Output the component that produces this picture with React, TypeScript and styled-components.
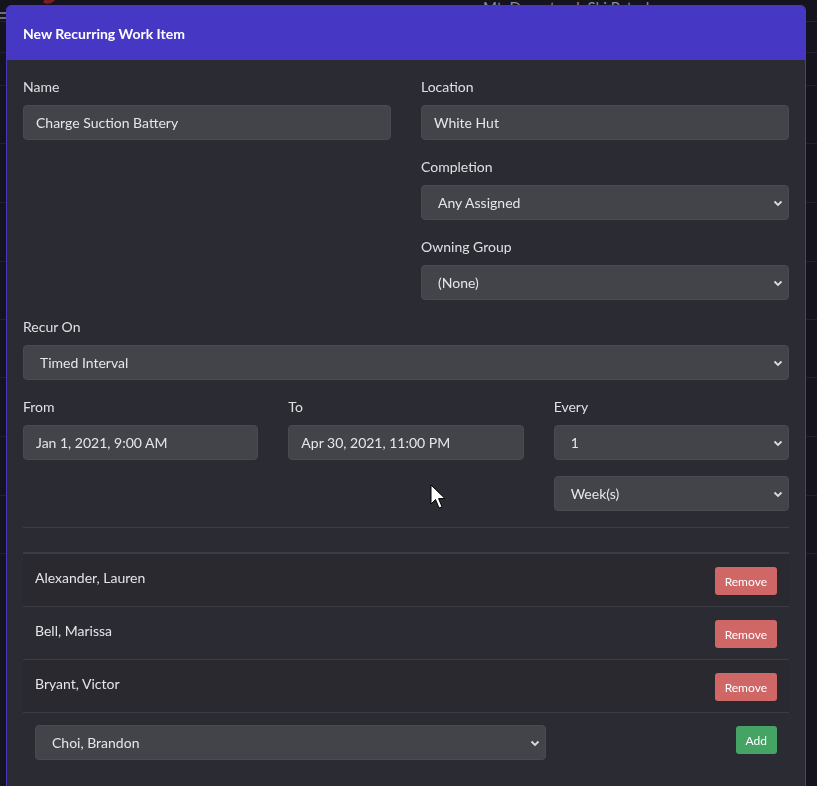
import React from "react";
import styled, { createGlobalStyle } from "styled-components";

const Global = createGlobalStyle`
  html, body { margin: 0; padding: 0; }
  body {
    background: #14131e;
    font-family: "Segoe UI", Lato, "Liberation Sans", sans-serif;
    color: #e3e3e6;
    overflow: hidden;
  }
  * { box-sizing: border-box; }
`;

const Page = styled.div`
  width: 817px;
  height: 786px;
  overflow: hidden;
`;

const NavBar = styled.div`
  height: 22px;
  display: flex;
  align-items: flex-start;
  border-bottom: 1px solid #25242f;
`;

const Hamburger = styled.div`
  width: 8px;
  margin-top: 12px;
  display: flex;
  flex-direction: column;
  gap: 3px;
  & > span { display: block; height: 2px; background: #6d6d75; }
`;

const Logo = styled.svg`
  width: 14px;
  height: 10px;
  margin-left: 34px;
  margin-top: -4px;
`;

const NavTitle = styled.div`
  margin-left: 427px;
  margin-top: -2px;
  font-size: 15px;
  color: #8c8c95;
`;

const BgRow = styled.div<{ $h: number }>`
  height: ${(p) => p.$h}px;
  border-bottom: 1px solid #23222d;
`;

const Modal = styled.div`
  position: fixed;
  top: 5px;
  left: 6px;
  width: 800px;
  height: 800px;
  background: #2b2b33;
  border: 1px solid #4638c4;
  border-radius: 5px 5px 0 0;
  overflow: hidden;
`;

const Header = styled.div`
  height: 54px;
  background: #4638c4;
  display: flex;
  align-items: center;
  padding: 0 16px;
  font-size: 14px;
  font-weight: 700;
  color: #ffffff;
`;

const Body = styled.div`
  padding: 16px;
  display: flex;
  flex-direction: column;
`;

const Grid = styled.div<{ $cols: number }>`
  display: grid;
  grid-template-columns: repeat(${(p) => p.$cols}, 1fr);
  column-gap: 30px;
`;

const Col = styled.div`
  display: flex;
  flex-direction: column;
`;

const Group = styled.div`
  display: flex;
  flex-direction: column;
  margin-bottom: 16px;
`;

const Label = styled.label`
  font-size: 14px;
  line-height: 21px;
  color: #e0e0e3;
  margin-bottom: 8px;
`;

const Input = styled.input`
  height: 35px;
  width: 100%;
  background: #434449;
  border: 1px solid #4a4b51;
  border-radius: 4px;
  color: #e6e6e9;
  font-family: inherit;
  font-size: 14px;
  padding: 0 12px;
  outline: none;
`;

const SelectWrap = styled.div`
  position: relative;
  width: 100%;
`;

const SelectBox = styled.select`
  appearance: none;
  -webkit-appearance: none;
  height: 35px;
  width: 100%;
  background: #434449;
  border: 1px solid #4a4b51;
  border-radius: 4px;
  color: #e6e6e9;
  font-family: inherit;
  font-size: 14px;
  padding: 0 16px;
  outline: none;
`;

const Chevron = styled.svg`
  position: absolute;
  right: 6px;
  top: 50%;
  width: 10px;
  height: 10px;
  margin-top: -5px;
  pointer-events: none;
`;

const Select: React.FC<{ value: string }> = ({ value }) => (
  <SelectWrap>
    <SelectBox defaultValue={value}>
      <option>{value}</option>
    </SelectBox>
    <Chevron viewBox="0 0 10 10">
      <path d="M1.5 3.5 L5 7 L8.5 3.5" fill="none" stroke="#dcdce0" strokeWidth="1.8" />
    </Chevron>
  </SelectWrap>
);

const Divider = styled.hr`
  border: 0;
  border-top: 1px solid #3e3e46;
  margin: 0 0 24px 0;
`;

const Table = styled.div`
  border-top: 2px solid #3c3c44;
  display: flex;
  flex-direction: column;
`;

const Row = styled.div<{ $striped?: boolean }>`
  display: flex;
  align-items: flex-start;
  justify-content: space-between;
  padding: 12px;
  height: 53px;
  border-bottom: 1px solid #3c3c44;
  background: ${(p) => (p.$striped ? "#29292f" : "transparent")};
  font-size: 14px;
  color: #e6e6e9;
  &:last-child {
    border-bottom: 0;
    height: auto;
  }
`;

const Name = styled.span`
  line-height: 21px;
  margin-top: 1px;
`;

const AddCell = styled.div`
  width: 511px;
`;

const Btn = styled.button<{ $variant: "danger" | "success" }>`
  height: 28px;
  margin-top: 1px;
  padding: 0 10px;
  border: 0;
  border-radius: 3px;
  font-family: inherit;
  font-size: 12px;
  color: #ffffff;
  background: ${(p) => (p.$variant === "danger" ? "#d06767" : "#45a363")};
`;

const Cursor = styled.svg`
  position: fixed;
  left: 430px;
  top: 484px;
  width: 17px;
  height: 27px;
`;

const people = ["Alexander, Lauren", "Bell, Marissa", "Bryant, Victor"];

export default function App() {
  return (
    <Page>
      <Global />
      <NavBar>
        <Hamburger><span /><span /></Hamburger>
        <Logo viewBox="0 0 14 10">
          <path d="M1 6 C3 1, 10 0, 13 4 C10 8, 4 9, 1 6 Z" fill="#7a1d24" />
        </Logo>
        <NavTitle>Mt. Dumptruck Ski Patrol</NavTitle>
      </NavBar>
      <BgRow $h={31} />
      <BgRow $h={33} />
      <BgRow $h={58} />
      <BgRow $h={59} />
      <BgRow $h={59} />
      <BgRow $h={58} />
      <BgRow $h={58} />
      <BgRow $h={59} />
      <BgRow $h={59} />
      <BgRow $h={58} />

      <Modal>
        <Header>New Recurring Work Item</Header>
        <Body>
          <Grid $cols={2}>
            <Col>
              <Group>
                <Label>Name</Label>
                <Input defaultValue="Charge Suction Battery" />
              </Group>
            </Col>
            <Col>
              <Group>
                <Label>Location</Label>
                <Input defaultValue="White Hut" />
              </Group>
              <Group>
                <Label>Completion</Label>
                <Select value="Any Assigned" />
              </Group>
              <Group>
                <Label>Owning Group</Label>
                <Select value="(None)" />
              </Group>
            </Col>
          </Grid>
          <Group>
            <Label>Recur On</Label>
            <Select value="Timed Interval" />
          </Group>
          <Grid $cols={3}>
            <Col>
              <Group>
                <Label>From</Label>
                <Input defaultValue="Jan 1, 2021, 9:00 AM" />
              </Group>
            </Col>
            <Col>
              <Group>
                <Label>To</Label>
                <Input defaultValue="Apr 30, 2021, 11:00 PM" />
              </Group>
            </Col>
            <Col>
              <Group>
                <Label>Every</Label>
                <Select value="1" />
              </Group>
              <Group>
                <Select value="Week(s)" />
              </Group>
            </Col>
          </Grid>
          <Divider />
          <Table>
            {people.map((p, i) => (
              <Row key={p} $striped={i % 2 === 0}>
                <Name>{p}</Name>
                <Btn $variant="danger">Remove</Btn>
              </Row>
            ))}
            <Row>
              <AddCell>
                <Select value="Choi, Brandon" />
              </AddCell>
              <Btn $variant="success">Add</Btn>
            </Row>
          </Table>
        </Body>
      </Modal>
      <Cursor viewBox="0 0 17 27">
        <path d="M1 1 L1 20 L5.5 15.5 L9 24 L12 22.8 L8.6 14.6 L15 14.6 Z" fill="#ffffff" stroke="#000000" strokeWidth="1" />
      </Cursor>
    </Page>
  );
}
